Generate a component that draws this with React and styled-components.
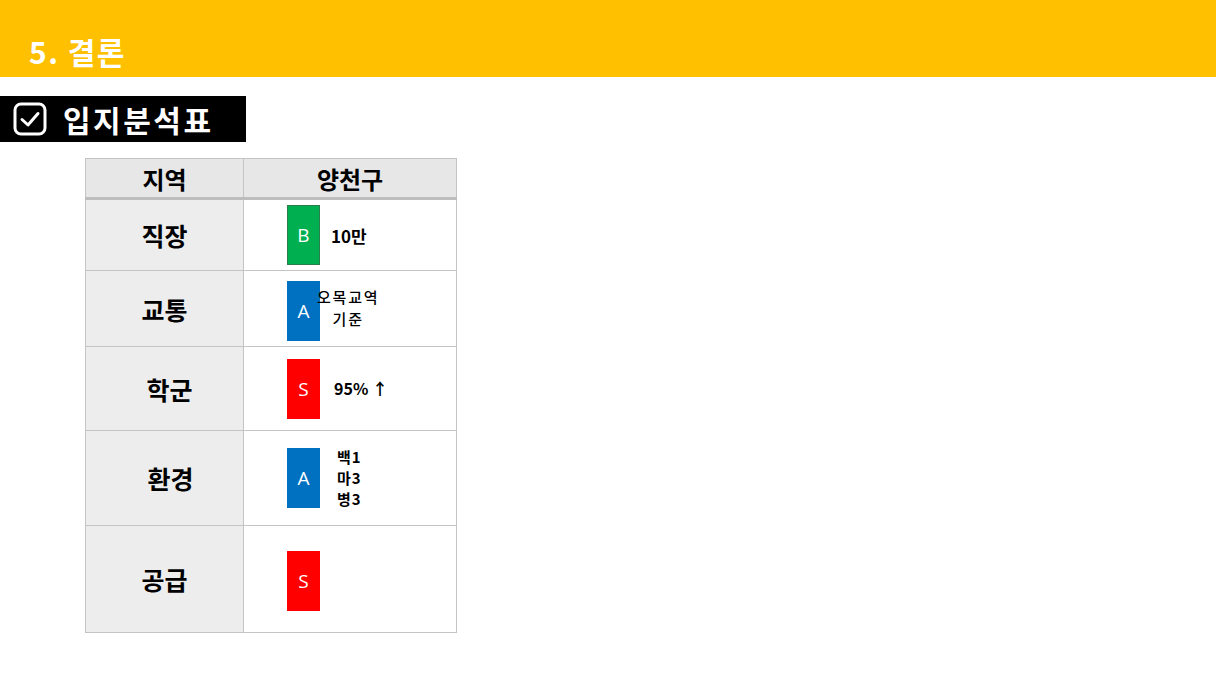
import React from 'react';
import styled, { createGlobalStyle } from 'styled-components';

const color = {
	yellow: '#ffc000',
	black: '#000000',
	white: '#ffffff',
	line: '#c4c4c4',
	labelBg: '#ededed',
	headBg: '#e7e7e7',
	green: '#00b050',
	blue: '#0070c0',
	red: '#ff0000',
};

const GlobalStyle = createGlobalStyle`
	body {
		margin: 0;
		background: #fff;
		font-family: "Noto Sans CJK KR", "Noto Sans", sans-serif;
		color: #000;
	}
`;

const Page = styled.div`
	width: 1216px;
	height: 684px;
	overflow: hidden;
`;

const TopBar = styled.header`
	height: 77px;
	background: ${color.yellow};
	display: flex;
	align-items: flex-end;
	padding: 0 0 4px 29px;
	box-sizing: border-box;
	h1 {
		margin: 0;
		color: ${color.white};
		font-size: 30px;
		font-weight: 700;
		letter-spacing: 1.5px;
	}
`;

const SectionTag = styled.div`
	margin-top: 19px;
	width: 246px;
	height: 46px;
	background: ${color.black};
	display: flex;
	align-items: center;
	gap: 16px;
	padding-left: 13px;
	box-sizing: border-box;
	span {
		color: ${color.white};
		font-size: 30px;
		font-weight: 700;
		letter-spacing: 2.5px;
	}
`;

const Table = styled.table`
	margin: 16px 0 0 85px;
	border-collapse: collapse;
	border: 1.5px solid ${color.line};
	td, th {
		border: 1px solid ${color.line};
		padding: 0;
	}
`;

const HeadCell = styled.th`
	height: 38px;
	background: ${color.headBg};
	font-size: 24px;
	font-weight: 700;
	border-bottom: 3px solid #bdbdbd !important;
	width: ${(p) => p.$w}px;
`;

const Row = styled.tr`
	height: ${(p) => p.$h}px;
`;

const Label = styled.td`
	background: ${color.labelBg};
	text-align: center;
	font-size: 25px;
	font-weight: 700;
	padding-left: ${(p) => p.$shift || 0}px !important;
`;

const ValueCell = styled.td`
	vertical-align: middle;
`;

const ValueInner = styled.div`
	display: flex;
	align-items: center;
	padding-left: 43px;
	transform: translateY(${(p) => p.$dy || 0}px);
`;

const Badge = styled.div`
	width: 33px;
	height: 60px;
	background: ${(p) => p.$bg};
	border: 1px solid ${(p) => p.$edge || p.$bg};
	box-sizing: border-box;
	color: ${color.white};
	font-family: "Open Sans", "Noto Sans", sans-serif;
	font-size: 19px;
	display: flex;
	align-items: center;
	justify-content: center;
	flex-shrink: 0;
`;

const Note = styled.div`
	margin-left: ${(p) => p.$gap}px;
	font-size: ${(p) => p.$size || 16}px;
	font-weight: ${(p) => p.$weight || 700};
	letter-spacing: ${(p) => p.$ls || 0}px;
	line-height: ${(p) => p.$lh || 21}px;
	text-align: center;
	white-space: nowrap;
	transform: translateY(${(p) => p.$dy || 0}px);
`;

const CheckIcon = () => (
	<svg width="34" height="34" viewBox="0 0 34 34" fill="none">
		<rect x="2" y="2" width="30" height="30" rx="6" stroke="#fff" strokeWidth="3" />
		<path d="M9 17.5 L15 23 L25 11.5" stroke="#fff" strokeWidth="3" strokeLinecap="round" strokeLinejoin="round" />
	</svg>
);

const rows = [
	{ label: '직장', h: 72, grade: 'B', bg: color.green, edge: '#2e7d4f', note: ['10만'], gap: 11, size: 17 },
	{ label: '교통', h: 76, grade: 'A', bg: color.blue, note: ['오목교역', '기준'], gap: -3, size: 15, ls: 1.8, weight: 500, lh: 22, ndy: -3, dy: 2 },
	{ label: '학군', h: 84, grade: 'S', bg: color.red, note: ['95% ↑'], gap: 14, size: 16, shift: 10 },
	{ label: '환경', h: 95, grade: 'A', bg: color.blue, note: ['백1', '마3', '병3'], gap: 17, size: 15, ls: 1, lh: 21, ndy: -1, shift: 12 },
	{ label: '공급', h: 107, grade: 'S', bg: color.red, note: [], gap: 0, dy: 2 },
];

export default function App() {
	return (
		<Page>
			<GlobalStyle />
			<TopBar>
				<h1>5. 결론</h1>
			</TopBar>
			<SectionTag>
				<CheckIcon />
				<span>입지분석표</span>
			</SectionTag>
			<Table>
				<thead>
					<tr>
						<HeadCell $w={157}>지역</HeadCell>
						<HeadCell $w={212}>양천구</HeadCell>
					</tr>
				</thead>
				<tbody>
					{rows.map((r) => (
						<Row key={r.label} $h={r.h}>
							<Label $shift={r.shift}>{r.label}</Label>
							<ValueCell>
								<ValueInner $dy={r.dy}>
									<Badge $bg={r.bg} $edge={r.edge}>{r.grade}</Badge>
									{r.note.length > 0 && (
										<Note $gap={r.gap} $size={r.size} $ls={r.ls} $weight={r.weight} $lh={r.lh} $dy={r.ndy}>
											{r.note.map((line) => (
												<div key={line}>{line}</div>
											))}
										</Note>
									)}
								</ValueInner>
							</ValueCell>
						</Row>
					))}
				</tbody>
			</Table>
		</Page>
	);
}
